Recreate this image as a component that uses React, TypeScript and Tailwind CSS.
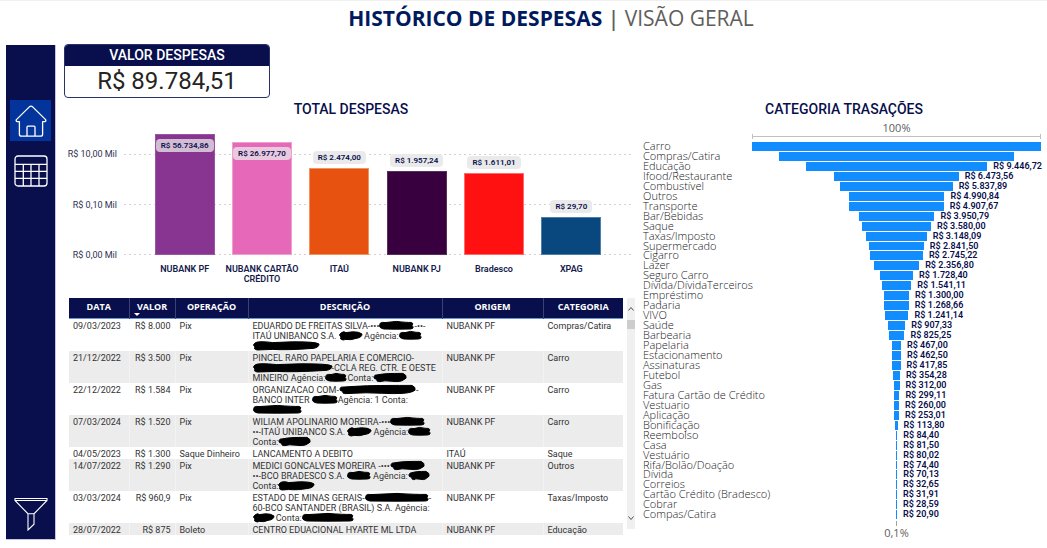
import React from "react";

const din = "font-['Roboto','Liberation_Sans',sans-serif]";
const segoe = "font-['Open_Sans','Noto_Sans',sans-serif]";

/* ---------- data ---------- */

const accounts = [
  { name: "NUBANK PF", value: "R$ 56.734,86", height: 121, color: "bg-[#883491] border-[#9a55a2]", inside: true },
  { name: "NUBANK CARTÃO CRÉDITO", value: "R$ 26.977,70", height: 113, color: "bg-[#e668b9] border-[#efa0d3]", inside: true },
  { name: "ITAÚ", value: "R$ 2.474,00", height: 87, color: "bg-[#e85210] border-[#f0945f]", inside: false },
  { name: "NUBANK PJ", value: "R$ 1.957,24", height: 84, color: "bg-[#38003f] border-[#55305c]", inside: false },
  { name: "Bradesco", value: "R$ 1.611,01", height: 82, color: "bg-[#ff1111] border-[#ff6a6a]", inside: false },
  { name: "XPAG", value: "R$ 29,70", height: 38, color: "bg-[#09487f] border-[#4f7fa8]", inside: false },
];

const categories: [string, number, string][] = [
  ["Carro", 15030, ""],
  ["Compras/Catira", 12260, ""],
  ["Educação", 9446.72, "R$ 9.446,72"],
  ["Ifood/Restaurante", 6473.56, "R$ 6.473,56"],
  ["Combustível", 5837.89, "R$ 5.837,89"],
  ["Outros", 4990.84, "R$ 4.990,84"],
  ["Transporte", 4907.67, "R$ 4.907,67"],
  ["Bar/Bebidas", 3950.79, "R$ 3.950,79"],
  ["Saque", 3580, "R$ 3.580,00"],
  ["Taxas/Imposto", 3148.09, "R$ 3.148,09"],
  ["Supermercado", 2841.5, "R$ 2.841,50"],
  ["Cigarro", 2745.22, "R$ 2.745,22"],
  ["Lazer", 2356.8, "R$ 2.356,80"],
  ["Seguro Carro", 1728.4, "R$ 1.728,40"],
  ["Dívida/DívidaTerceiros", 1541.11, "R$ 1.541,11"],
  ["Empréstimo", 1300, "R$ 1.300,00"],
  ["Padaria", 1268.66, "R$ 1.268,66"],
  ["VIVO", 1241.14, "R$ 1.241,14"],
  ["Saúde", 907.33, "R$ 907,33"],
  ["Barbearia", 825.25, "R$ 825,25"],
  ["Papelaria", 467, "R$ 467,00"],
  ["Estacionamento", 462.5, "R$ 462,50"],
  ["Assinaturas", 417.85, "R$ 417,85"],
  ["Futebol", 354.28, "R$ 354,28"],
  ["Gas", 312, "R$ 312,00"],
  ["Fatura Cartão de Crédito", 299.11, "R$ 299,11"],
  ["Vestuario", 260, "R$ 260,00"],
  ["Aplicação", 253.01, "R$ 253,01"],
  ["Bonificação", 113.8, "R$ 113,80"],
  ["Reembolso", 84.4, "R$ 84,40"],
  ["Casa", 81.5, "R$ 81,50"],
  ["Vestuário", 80.02, "R$ 80,02"],
  ["Rifa/Bolão/Doação", 74.4, "R$ 74,40"],
  ["Dívida", 70.13, "R$ 70,13"],
  ["Correios", 32.65, "R$ 32,65"],
  ["Cartão Crédito (Bradesco)", 31.91, "R$ 31,91"],
  ["Cobrar", 28.59, "R$ 28,59"],
  ["Compas/Catira", 20.9, "R$ 20,90"],
];

/* A number in a line is the width of a redacted stretch. */
type Line = (string | number)[];

const rows: { date: string; value: string; op: string; lines: Line[]; origin: string; category: string }[] = [
  { date: "09/03/2023", value: "R$ 8.000", op: "Pix", lines: [["EDUARDO DE FREITAS SILVA-•••", 35, "-••-"], ["ITAÚ UNIBANCO S.A. ", 23, " Agência:", 23], [66]], origin: "NUBANK PF", category: "Compras/Catira" },
  { date: "21/12/2022", value: "R$ 3.500", op: "Pix", lines: [["PINCEL RARO PAPELARIA E COMERCIO-"], [79, "-CCLA REG. CTR. E OESTE"], ["MINEIRO Agência:", 22, "Conta:", 34]], origin: "NUBANK PF", category: "Carro" },
  { date: "22/12/2022", value: "R$ 1.584", op: "Pix", lines: [["ORGANIZACAO COM-", 77, "-"], ["BANCO INTER ", 26, "Agência: 1 Conta:"], [49]], origin: "NUBANK PF", category: "Carro" },
  { date: "07/03/2024", value: "R$ 1.520", op: "Pix", lines: [["WILIAM APOLINARIO MOREIRA-•••", 35], ["••-ITAÚ UNIBANCO S.A. ", 24, " Agência:", 23], ["Conta:", 33]], origin: "NUBANK PF", category: "Carro" },
  { date: "04/05/2023", value: "R$ 1.300", op: "Saque Dinheiro", lines: [["LANCAMENTO A DEBITO"]], origin: "ITAÚ", category: "Saque" },
  { date: "14/07/2022", value: "R$ 1.290", op: "Pix", lines: [["MEDICI GONCALVES MOREIRA -•••", 35], ["••-BCO BRADESCO S.A. ", 24, " Agência:", 22], ["Conta:", 36]], origin: "NUBANK PF", category: "Outros" },
  { date: "03/03/2024", value: "R$ 960,9", op: "Pix", lines: [["ESTADO DE MINAS GERAIS-", 64, "-"], ["60-BCO SANTANDER (BRASIL) S.A. Agência:"], [21, " Conta:", 52]], origin: "NUBANK PF", category: "Taxas/Imposto" },
  { date: "28/07/2022", value: "R$ 875", op: "Boleto", lines: [["CENTRO EDUACIONAL HYARTE ML LTDA"]], origin: "NUBANK PF", category: "Educação" },
];

/* ---------- drawings ---------- */

function HomeIcon() {
  return (
    <svg viewBox="0 0 32 32" className="h-8 w-8" fill="none" stroke="#fff" strokeWidth="1.3" strokeLinejoin="round">
      <path d="M14.6 1.6Q16 .6 17.4 1.6L30.6 14.6Q31.4 16.3 29.6 16.7H27.6V29.2Q27.6 31.2 25.6 31.2H6.4Q4.4 31.2 4.4 29.2V16.7H2.4Q.6 16.3 1.4 14.6Z" />
      <path d="M12 31V22.2Q12 21.2 13 21.2H19Q20 21.2 20 22.2V31" />
    </svg>
  );
}

function TableIcon() {
  return (
    <svg viewBox="0 0 34 32" className="h-8 w-[34px]" fill="none" stroke="#fff" strokeWidth="1.3">
      <rect x="1" y="1" width="32" height="30" rx="3" />
      <path d="M1 9.3H33M1 16.3H33M1 23.3H33M9.3 9.3V31M17 9.3V31M25 9.3V31" />
    </svg>
  );
}

function FilterIcon() {
  return (
    <svg viewBox="0 0 34 34" className="h-[34px] w-[34px]" fill="none" stroke="#fff" strokeWidth="1.1">
      <path d="M1 1.5H33V3.5L20 16.8V27.2L14 33V16.8L1 3.5ZM1 3.5H33M14 16.8H20" />
    </svg>
  );
}

function Redaction({ width, variant }: { width: number; variant: number }) {
  const w = width;
  const shapes = [
    `M2 3.2Q${w * 0.3} 1.8 ${w * 0.45} 1.6T${w - 4} 1.4Q${w} 3 ${w - 1} 6.2Q${w - 5} 9.8 ${w * 0.7} 9.6L${w * 0.35} 8.8L7 9.6Q3 9.8 4 7.4Q-1 6.4 2 3.2Z`,
    `M1 4Q1 1.8 6 2.6L${w * 0.5} 1.4Q${w * 0.8} 2.6 ${w - 3} 2.4Q${w} 3 ${w - 2} 5.4Q${w + 1} 8.6 ${w - 4} 9L${w * 0.5} 9.2L5 9Q-1 8 1 4Z`,
    `M2 3Q5 .6 ${w * 0.3} 2.6L${w * 0.6} 1.8Q${w - 3} 1.6 ${w} 4Q${w} 7.6 ${w - 6} 8.4Q${w * 0.5} 10.4 ${w * 0.3} 9.4L4 10Q0 9 2 7Q-1 5 2 3Z`,
  ];
  return (
    <svg width={w} height="11" viewBox={`0 0 ${w} 11`} className="-my-px shrink-0 overflow-visible" fill="#000" stroke="#000" strokeWidth="1" aria-hidden="true">
      <path d={shapes[variant % shapes.length]} />
    </svg>
  );
}

/* ---------- panels ---------- */

function Sidebar() {
  return (
    <nav className="mt-px flex w-[50px] shrink-0 flex-col items-center border-r border-b border-[#c4c6dc] bg-[#080f4c] pt-[55px] pb-[8px]">
      <button aria-label="Início" className="flex h-[41px] w-[41px] items-center justify-center bg-[#03349b]">
        <HomeIcon />
      </button>
      <button aria-label="Tabela" className="mt-[9px] flex h-[41px] w-[41px] items-center justify-center">
        <TableIcon />
      </button>
      <button aria-label="Filtros" className="mt-auto flex w-[41px] items-center justify-center">
        <FilterIcon />
      </button>
    </nav>
  );
}

function TotalCard() {
  return (
    <section className="w-[206px] overflow-hidden rounded-[4px] border border-[#2b3067] text-center">
      <h2 className="bg-[#080f4c] text-[14px] leading-[21px] font-medium text-white">VALOR DESPESAS</h2>
      <p className="text-[24px] leading-[31px] text-[#252423]">R$ 89.784,51</p>
    </section>
  );
}

const gridline = "h-px bg-[repeating-linear-gradient(90deg,#d2d2d2_0_2px,transparent_2px_5px)]";

function AccountsChart() {
  return (
    <section className="mt-[2px]">
      <h2 className="pl-[3px] text-center text-[14px] leading-[18px] font-medium text-[#080f4c]">TOTAL DESPESAS</h2>
      <div className="mt-[16px] flex pr-[3px]">
        <div className="flex w-[53px] flex-col justify-between pt-[13px] text-right text-[9px] leading-[14px] whitespace-nowrap text-[#2e3350]">
          <span>R$ 10,00 Mil</span>
          <span>R$ 0,10 Mil</span>
          <span className="-mb-[7px]">R$ 0,00 Mil</span>
        </div>
        <div className="ml-[7px] grid h-[121px] flex-1">
          <div className="col-start-1 row-start-1 mt-[20px] flex flex-col justify-between">
            <div className={gridline} />
            <div className={gridline} />
            <div className={gridline} />
          </div>
          <div className="relative col-start-1 row-start-1 mr-[22px] ml-[22px] grid grid-cols-6">
            {accounts.map((a) => (
              <div key={a.name} className="flex flex-col items-center justify-end">
                {!a.inside && (
                  <span className="mb-[4px] rounded-[4px] bg-[#eaeaea] px-[5px] text-[8px] leading-[13px] font-semibold whitespace-nowrap text-[#080f4c]">
                    {a.value}
                  </span>
                )}
                <div className={`flex w-[60px] items-start justify-center border ${a.color}`} style={{ height: a.height }}>
                  {a.inside && (
                    <span className="mt-[4px] w-full rounded-[4px] bg-[#eaeaea]/75 text-center text-[8px] leading-[13px] font-semibold whitespace-nowrap text-[#080f4c]">
                      {a.value}
                    </span>
                  )}
                </div>
              </div>
            ))}
          </div>
        </div>
      </div>
      <div className="mr-[25px] ml-[82px] grid h-[34px] grid-cols-6 pt-[9px] text-center text-[9px] leading-[10px] font-semibold text-[#151b4d]">
        {accounts.map((a) => (
          <span key={a.name}>{a.name}</span>
        ))}
      </div>
    </section>
  );
}

function Transactions() {
  const head = "border-l border-[#3a4274] align-top pt-[2px] leading-[13px] font-bold";
  const cell = "border-l border-white/40 px-[4px] pt-[2px] align-top";
  return (
    <section className="mt-[9px] ml-[5px] flex">
      <table className="min-w-0 flex-1 table-fixed border-collapse text-[9px] leading-[10px] text-[#333]">
        <colgroup>
          <col className="w-[60px]" />
          <col className="w-[46px]" />
          <col className="w-[73px]" />
          <col />
          <col className="w-[101px]" />
          <col className="w-[80px]" />
        </colgroup>
        <thead className={`h-[20px] border-b border-[#6b93d6] bg-[#080f4c] text-[9px] text-white ${segoe}`}>
          <tr>
            <th className="pt-[2px] align-top leading-[13px] font-bold">DATA</th>
            <th className={head}>
              VALOR
              <svg viewBox="0 0 6 3" className="ml-[4px] block h-[3px] w-[6px]" fill="#fff" aria-hidden="true">
                <path d="M0 0H6L3 3Z" />
              </svg>
            </th>
            <th className={head}>OPERAÇÃO</th>
            <th className={head}>DESCRIÇÃO</th>
            <th className={head}>ORIGEM</th>
            <th className={head}>CATEGORIA</th>
          </tr>
        </thead>
        <tbody>
          {rows.map((r, i) => (
            <tr key={r.date} className="even:bg-[#ececec]">
              <td className="px-[4px] pt-[2px] align-top">{r.date}</td>
              <td className={`${cell} text-right whitespace-nowrap`}>{r.value}</td>
              <td className={`${cell} whitespace-nowrap`}>{r.op}</td>
              <td className={cell}>
                {r.lines.map((line, j) => (
                  <div key={j} className="flex h-[10px] whitespace-pre">
                    {line.map((part, k) =>
                      typeof part === "number" ? (
                        <Redaction key={k} width={part} variant={i + j + k} />
                      ) : (
                        <span key={k}>{part}</span>
                      ),
                    )}
                  </div>
                ))}
              </td>
              <td className={cell}>{r.origin}</td>
              <td className={cell}>{r.category}</td>
            </tr>
          ))}
        </tbody>
      </table>
      <div className="ml-[4px] flex h-[231px] w-[8px] flex-col items-center bg-[#f0f0f0]">
        <svg viewBox="0 0 8 22" className="h-[22px] w-[8px]" fill="none" stroke="#505050">
          <path d="M1.5 12.5L4 9.5L6.5 12.5" />
        </svg>
        <div className="h-[9px] w-full bg-[#cdcdcd]" />
        <svg viewBox="0 0 8 22" className="mt-auto h-[22px] w-[8px]" fill="none" stroke="#505050">
          <path d="M1.5 9.5L4 12.5L6.5 9.5" />
        </svg>
      </div>
    </section>
  );
}

function CategoryFunnel() {
  const max = categories[0][1];
  return (
    <section className={`flex min-w-0 flex-1 flex-col pt-[56px] ${segoe}`}>
      <h2 className={`pl-[4px] text-center text-[14px] leading-[18px] font-medium text-[#080f4c] ${din}`}>CATEGORIA TRASAÇÕES</h2>
      <div className="ml-[109px] text-center text-[11px] leading-[12px] text-[#605e5c]">
        <div className="pt-[4px]">100%</div>
        <div className="flex h-[5px] items-center border-x border-[#c0c0c0]">
          <div className="h-px flex-1 bg-[#c0c0c0]" />
        </div>
      </div>
      <ul className="mt-[2px] flex h-[378px] flex-col">
        {categories.map(([name, amount, label]) => (
          <li key={name} className="flex min-h-0 flex-1 items-stretch">
            <span className="w-[109px] shrink-0 text-[11px] leading-[10px] font-light whitespace-nowrap text-[#22201e]">{name}</span>
            <div className="flex min-w-0 flex-1">
              <div className="min-w-0 flex-1" />
              <div className="mt-px min-w-px shrink-0 bg-[#118dff]" style={{ width: `${(amount / max) * 100}%` }} />
              <div className={`min-w-0 flex-1 text-[9px] leading-[11px] font-semibold whitespace-nowrap text-[#080f4c] ${din}`}>
                <span className="ml-[6px]">{label}</span>
              </div>
            </div>
          </li>
        ))}
      </ul>
      <div className="ml-[109px] flex flex-col items-center text-[11px] leading-[14px] text-[#605e5c]">
        <div className="mt-[2px] h-[5px] w-px bg-[#a0a0a0]" />
        <span>0,1%</span>
      </div>
    </section>
  );
}

export default function App() {
  return (
    <div className={`border-t border-[#f0f0f0] bg-white ${din}`}>
      <h1 className={`pt-[2px] pl-[55px] text-center text-[21px] leading-[30px] text-[#605e5c] ${segoe}`}>
        <strong className="font-bold text-[#001a5e]">HISTÓRICO DE DESPESAS</strong> <span className="font-semibold">|</span> VISÃO GERAL
      </h1>
      <main className="flex pt-[11px] pr-[6px] pl-[6px]">
        <Sidebar />
        <div className="ml-[8px] w-[571px] min-w-0 shrink-0">
          <TotalCard />
          <AccountsChart />
          <Transactions />
        </div>
        <div className="flex min-w-0 flex-1 pl-[8px]">
          <CategoryFunnel />
        </div>
      </main>
    </div>
  );
}
